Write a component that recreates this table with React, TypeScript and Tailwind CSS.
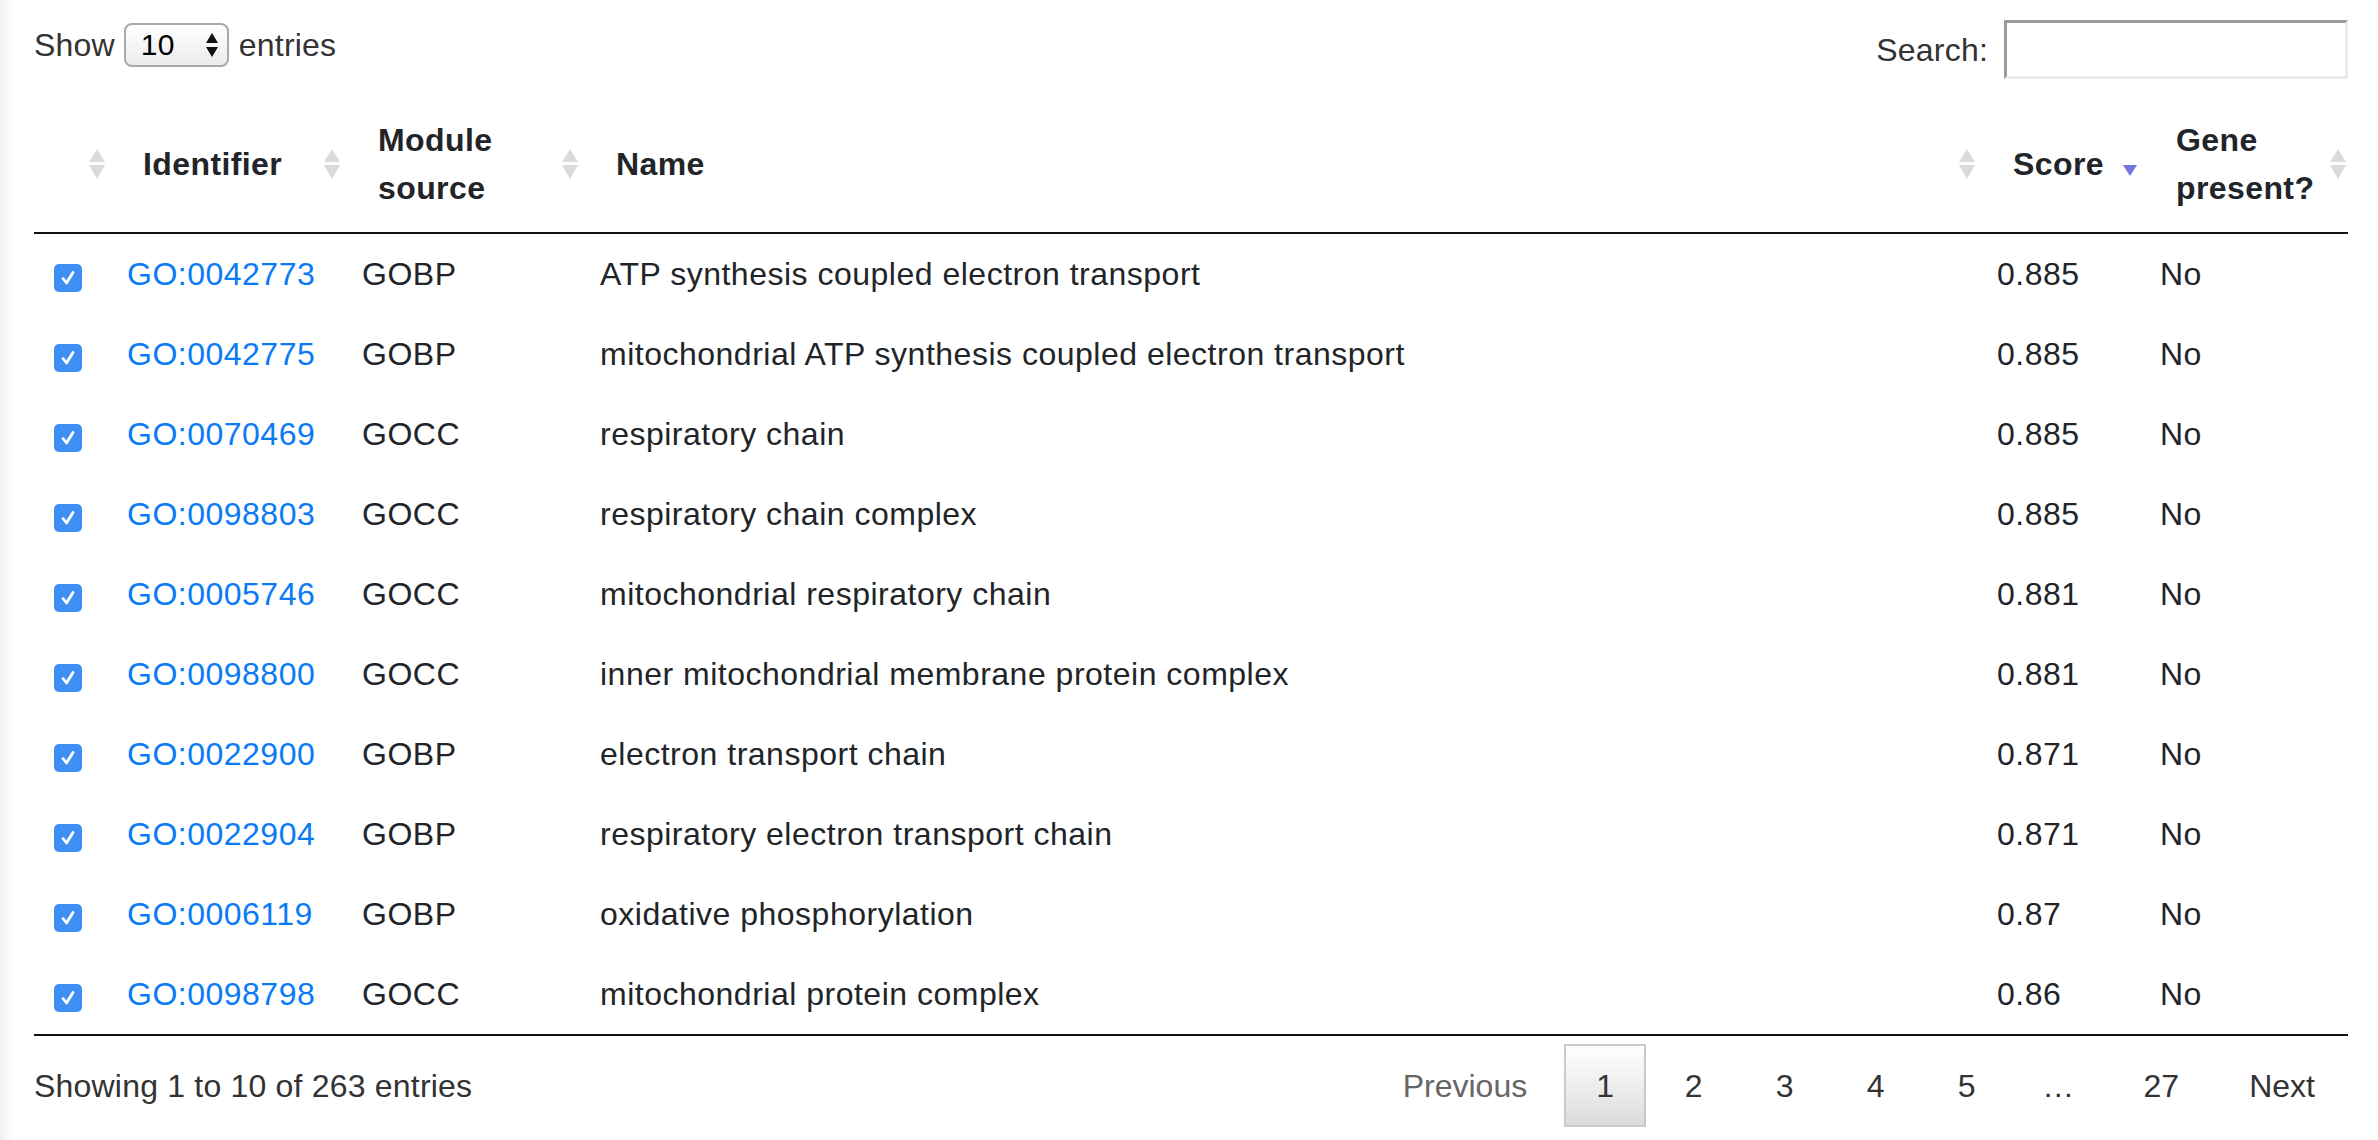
const rows = [
  { id: "GO:0042773", source: "GOBP", name: "ATP synthesis coupled electron transport", score: "0.885" },
  { id: "GO:0042775", source: "GOBP", name: "mitochondrial ATP synthesis coupled electron transport", score: "0.885" },
  { id: "GO:0070469", source: "GOCC", name: "respiratory chain", score: "0.885" },
  { id: "GO:0098803", source: "GOCC", name: "respiratory chain complex", score: "0.885" },
  { id: "GO:0005746", source: "GOCC", name: "mitochondrial respiratory chain", score: "0.881" },
  { id: "GO:0098800", source: "GOCC", name: "inner mitochondrial membrane protein complex", score: "0.881" },
  { id: "GO:0022900", source: "GOBP", name: "electron transport chain", score: "0.871" },
  { id: "GO:0022904", source: "GOBP", name: "respiratory electron transport chain", score: "0.871" },
  { id: "GO:0006119", source: "GOBP", name: "oxidative phosphorylation", score: "0.87" },
  { id: "GO:0098798", source: "GOCC", name: "mitochondrial protein complex", score: "0.86" },
];

const columns = [
  { label: "", width: "w-[73px]", sort: "both" },
  { label: "Identifier", width: "w-[235px]", sort: "both" },
  { label: "Module source", width: "w-[238px]", sort: "both" },
  { label: "Name", width: "w-[1397px]", sort: "both" },
  { label: "Score", width: "w-[163px]", sort: "desc" },
  { label: "Gene present?", width: "w-[208px]", sort: "both" },
];

function SortIcon({ mode }: { mode: string }) {
  if (mode === "desc") {
    return (
      <svg width="18" height="30" viewBox="0 0 18 30" className="shrink-0">
        <path d="M2 16 L16 16 L9 27 Z" fill="#7276de" />
      </svg>
    );
  }
  return (
    <svg width="18" height="30" viewBox="0 0 18 30" className="shrink-0">
      <path d="M9 0 L17 13 L1 13 Z" fill="#dadada" />
      <path d="M1 16 L17 16 L9 30 Z" fill="#dadada" />
    </svg>
  );
}

function CheckBox() {
  return (
    <div className="mt-[14px] mb-[6px] flex h-[28px] w-[28px] items-center justify-center rounded-[5px] bg-[#3f8ef5]">
      <svg width="20" height="20" viewBox="0 0 20 20">
        <path d="M5 10.5 L8.5 15 L15 4.5" fill="none" stroke="white" strokeWidth="2.8" strokeLinecap="round" strokeLinejoin="round" />
      </svg>
    </div>
  );
}

export default function App() {
  return (
    <div className="flex min-h-screen bg-white font-['Liberation_Sans',Arial,sans-serif] text-[32px] text-[#212529]">
      <div className="w-[14px] shrink-0 bg-linear-to-r from-[#f1f1f1] to-white" />
      <div className="flex-1 pl-[20px] pr-[30px]">
        <div className="flex h-[96px] items-start justify-between text-[#333] tracking-[0.2px]">
          <div className="mt-[23px] flex h-[44px] items-center leading-none">
            <span>Show</span>
            <div className="ml-[9px] flex h-[44px] w-[105px] items-center justify-between rounded-[8px] border-2 border-[#a9a9a9] bg-linear-to-b from-white to-[#ececec] pl-[15px] pr-[8px]">
              <span className="text-[30px] text-black">10</span>
              <svg width="14" height="28" viewBox="0 0 14 28">
                <path d="M7 2 L13 12 L1 12 Z" fill="#111" />
                <path d="M1 16 L13 16 L7 26 Z" fill="#111" />
              </svg>
            </div>
            <span className="ml-[10px]">entries</span>
          </div>
          <div className="mt-[20px] flex items-center">
            <span>Search:</span>
            <input
              className="ml-[16px] h-[59px] w-[344px] border-[3px] border-t-[#9b9b9b] border-l-[#9b9b9b] border-r-[#ebebeb] border-b-[#ebebeb] bg-white outline-none"
              type="text"
            />
          </div>
        </div>

        <table className="w-full table-fixed border-separate border-spacing-0">
          <colgroup>
            {columns.map((c, i) => (
              <col key={i} className={c.width} />
            ))}
          </colgroup>
          <thead>
            <tr>
              {columns.map((c, i) => (
                <th key={i} className="border-b-2 border-[#111] py-[20px] text-left align-middle font-bold tracking-[0.4px]">
                  <div className="flex items-center pl-[36px] pr-[1px]">
                    <span className="flex-1 leading-[48px]">{c.label}</span>
                    <SortIcon mode={c.sort} />
                  </div>
                </th>
              ))}
            </tr>
          </thead>
          <tbody className="tracking-[0.5px]">
            {rows.map((r, i) => {
              const last = i === rows.length - 1;
              const cell = `px-[20px] py-[16px] align-top leading-[48px] whitespace-nowrap ${last ? "border-b-2 border-[#111]" : ""}`;
              return (
                <tr key={r.id}>
                  <td className={cell}>
                    <CheckBox />
                  </td>
                  <td className={cell}>
                    <a className="text-[#0a7bf6]">{r.id}</a>
                  </td>
                  <td className={cell}>{r.source}</td>
                  <td className={cell}>{r.name}</td>
                  <td className={cell}>{r.score}</td>
                  <td className={cell}>No</td>
                </tr>
              );
            })}
          </tbody>
        </table>

        <div className="flex items-center justify-between pt-[8px] text-[#333]">
          <div className="leading-[48px] tracking-[0.2px]">Showing 1 to 10 of 263 entries</div>
          <div className="flex items-center leading-[48px]">
            <span className="px-[33px] py-[17px] text-[#666]">Previous</span>
            <span className="ml-[4px] flex h-[83px] w-[82px] items-center justify-center border-2 border-[#cacaca] bg-linear-to-b from-white to-[#dcdcdc]">1</span>
            <span className="ml-[4px] flex h-[83px] w-[87px] items-center justify-center">2</span>
            <span className="ml-[4px] flex h-[83px] w-[87px] items-center justify-center">3</span>
            <span className="ml-[4px] flex h-[83px] w-[87px] items-center justify-center">4</span>
            <span className="ml-[4px] flex h-[83px] w-[87px] items-center justify-center">5</span>
            <span className="flex h-[83px] w-[96px] items-center justify-center">…</span>
            <span className="ml-[4px] flex h-[83px] w-[102px] items-center justify-center">27</span>
            <span className="ml-[4px] flex h-[83px] items-center px-[33px]">Next</span>
          </div>
        </div>
      </div>
    </div>
  );
}
